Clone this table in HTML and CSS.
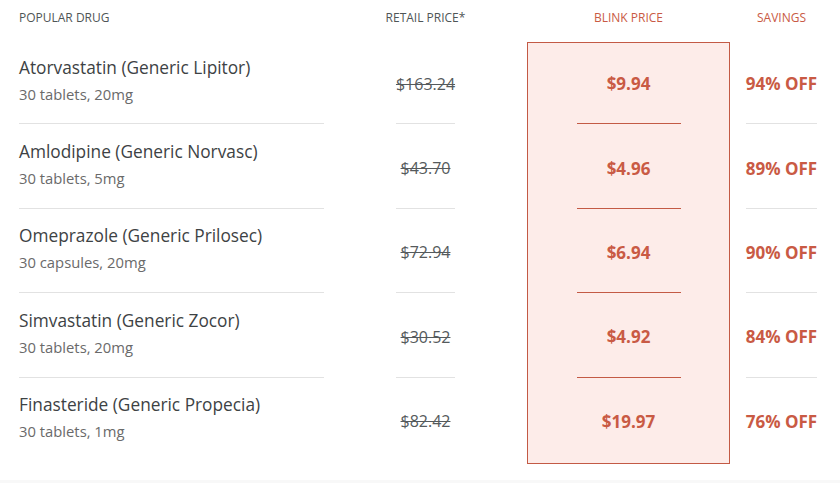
FILE: index.html
```html
<!DOCTYPE html>
<html lang="en">
<head>
<meta charset="utf-8">
<title>Popular drugs</title>
<link rel="stylesheet" href="styles.css">
</head>
<body>
<div class="page">
  <div class="table">
    <div class="blink-box"></div>

    <div class="th c1">POPULAR DRUG</div>
    <div class="th th-center c2">RETAIL PRICE*</div>
    <div class="th th-center th-red c3">BLINK PRICE</div>
    <div class="th th-center th-red c4">SAVINGS</div>

    <div class="cell drug r1"><div class="name">Atorvastatin (Generic Lipitor)</div><div class="sub">30 tablets, 20mg</div></div>
    <div class="cell retail r1"><span class="retail-in">$163.24</span></div>
    <div class="cell blink r1"><span class="blink-in">$9.94</span></div>
    <div class="cell save r1"><span class="save-in">94% OFF</span></div>

    <div class="cell drug r2"><div class="name">Amlodipine (Generic Norvasc)</div><div class="sub">30 tablets, 5mg</div></div>
    <div class="cell retail r2"><span class="retail-in">$43.70</span></div>
    <div class="cell blink r2"><span class="blink-in">$4.96</span></div>
    <div class="cell save r2"><span class="save-in">89% OFF</span></div>

    <div class="cell drug r3"><div class="name">Omeprazole (Generic Prilosec)</div><div class="sub">30 capsules, 20mg</div></div>
    <div class="cell retail r3"><span class="retail-in">$72.94</span></div>
    <div class="cell blink r3"><span class="blink-in">$6.94</span></div>
    <div class="cell save r3"><span class="save-in">90% OFF</span></div>

    <div class="cell drug r4"><div class="name">Simvastatin (Generic Zocor)</div><div class="sub">30 tablets, 20mg</div></div>
    <div class="cell retail r4"><span class="retail-in">$30.52</span></div>
    <div class="cell blink r4"><span class="blink-in">$4.92</span></div>
    <div class="cell save r4"><span class="save-in">84% OFF</span></div>

    <div class="cell drug r5 last"><div class="name">Finasteride (Generic Propecia)</div><div class="sub">30 tablets, 1mg</div></div>
    <div class="cell retail r5 last"><span class="retail-in">$82.42</span></div>
    <div class="cell blink r5 last"><span class="blink-in">$19.97</span></div>
    <div class="cell save r5 last"><span class="save-in">76% OFF</span></div>
  </div>
  <div class="footer-strip"></div>
</div>
</body>
</html>
```

FILE: styles.css
```css
html, body {
  margin: 0;
  padding: 0;
  background: #ffffff;
}
body {
  font-family: "Open Sans", "Noto Sans", sans-serif;
  color: #3c3c3c;
}
.page {
  width: 840px;
  height: 483px;
  overflow: hidden;
  display: flex;
  flex-direction: column;
}
.table {
  display: grid;
  grid-template-columns: 305px 203px 203px 103px;
  grid-template-rows: 42px repeat(5, 84.4px);
  padding-left: 19px;
}
.blink-box {
  grid-column: 3;
  grid-row: 2 / 7;
  border: 1px solid #c35a45;
  background: #fdece9;
  box-sizing: border-box;
}
.c1 { grid-column: 1; }
.c2 { grid-column: 2; }
.c3 { grid-column: 3; }
.c4 { grid-column: 4; }
.r1 { grid-row: 2; }
.r2 { grid-row: 3; }
.r3 { grid-row: 4; }
.r4 { grid-row: 5; }
.r5 { grid-row: 6; }
.th {
  grid-row: 1;
  font-size: 12px;
  color: #4f5556;
  padding-top: 9px;
  white-space: nowrap;
}
.th-center {
  text-align: center;
}
.th-red {
  color: #c95a44;
}
.cell {
  display: flex;
  align-items: stretch;
  justify-content: center;
  margin-bottom: 2px;
  position: relative;
  z-index: 1;
}
.drug {
  grid-column: 1;
  flex-direction: column;
  justify-content: center;
  border-bottom: 1px solid #e2e2e2;
  padding-bottom: 4px;
  box-sizing: border-box;
}
.retail { grid-column: 2; }
.blink { grid-column: 3; }
.save { grid-column: 4; }
.name {
  font-size: 17.3px;
  line-height: 22px;
  color: #3d4244;
  white-space: nowrap;
}
.sub {
  font-size: 14.8px;
  line-height: 22px;
  margin-top: 4px;
  color: #6a6a6a;
  white-space: nowrap;
}
.retail-in, .blink-in, .save-in {
  display: flex;
  align-items: center;
  justify-content: center;
  box-sizing: border-box;
  padding-top: 2px;
  white-space: nowrap;
}
.retail-in {
  width: 59px;
  border-bottom: 1px solid #e2e2e2;
  font-size: 16px;
  color: #555a5c;
  text-decoration: line-through;
}
.blink-in {
  width: 104px;
  border-bottom: 1px solid #c35a45;
  font-size: 17px;
  font-weight: 700;
  color: #c95a44;
}
.save-in {
  width: 71px;
  border-bottom: 1px solid #e2e2e2;
  font-size: 17px;
  font-weight: 700;
  color: #c95a44;
}
.last, .last .retail-in, .last .blink-in, .last .save-in {
  border-bottom-color: transparent;
}
.footer-strip {
  flex: 1;
  margin-top: 16px;
  background: #f8f8f8;
}
```
